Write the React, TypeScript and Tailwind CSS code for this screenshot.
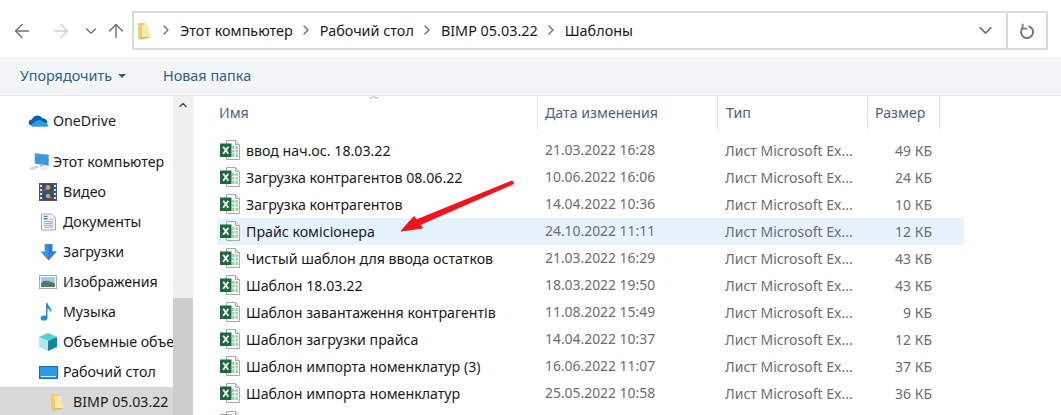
import React from 'react';
import { ArrowLeft, ArrowRight, ArrowUp, ChevronDown, ChevronRight, ChevronUp } from 'lucide-react';

const FolderIcon = ({ className }: { className?: string }) => (
  <svg viewBox="0 0 12 18" className={className}>
    <path d="M0 1 L7 1 L7 16 L2.5 17.5 L0 17 Z" fill="#f0cd6c" />
    <path d="M4 3 L10 3 L12 15 L4 15 Z" fill="#fbe9a8" />
    <path d="M2 15 L12 15 L12 16 L2 17.5 Z" fill="#e3bd5c" />
  </svg>
);

const RefreshIcon = () => (
  <svg viewBox="0 0 16 16" className="w-[16px] h-[16px] mt-[1px]">
    <path d="M9.5 3.2 A6 6 0 1 1 3.6 5" fill="none" stroke="#7a7a7a" strokeWidth="2" />
    <path d="M3.6 .8 V5.6 H8.2" fill="none" stroke="#7a7a7a" strokeWidth="1.8" />
  </svg>
);

const ExcelIcon = () => (
  <svg viewBox="0 0 20 20" className="w-[20px] h-[20px] shrink-0">
    <path d="M6.5 .5 H15.5 L19.5 4.5 V19.5 H6.5 Z" fill="#fff" stroke="#a8a8a8" />
    <path d="M15.5 .5 V4.5 H19.5" fill="#e4e4e4" stroke="#a8a8a8" />
    <rect x="12" y="6" width="6" height="11" fill="#9fd0ae" />
    <path d="M12 9.5 H18 M12 13 H18 M15 6 V17" stroke="#fff" strokeWidth="0.9" />
    <rect x="0" y="3.5" width="11.5" height="13.5" fill="#1b6b3e" />
    <path d="M3.2 6.8 L8.4 13.8 M8.4 6.8 L3.2 13.8" stroke="#fff" strokeWidth="1.8" />
  </svg>
);

const OneDriveIcon = () => (
  <svg viewBox="0 0 22 14" className="w-[21px] h-[14px]">
    <path d="M5 12 C0 12 -1 6 4 5.5 C6 0 13 0 15 4 C19 4 21 7 20 9 Z" fill="#0a5fb4" />
    <path d="M6 13 C3 13 3 9 6.5 8.8 C9 5 14 5 16 8 C20 7.5 23 13 19 13 Z" fill="#2a9fe8" />
  </svg>
);

const PcIcon = () => (
  <svg viewBox="0 0 21 18" className="w-[21px] h-[18px] shrink-0">
    <path d="M7 .5 L20.5 2 V12.5 L7 10.5 Z" fill="#3a9be0" stroke="#5aa6d8" strokeWidth="0.6" />
    <path d="M12 11.5 L15 12 V14 L12 13.5 Z" fill="#b7c0c7" />
    <path d="M0 15 L8 12.5 L12 14 L4 17.5 Z" fill="#d5dade" />
    <path d="M12 15.5 L19 14 L20.5 15.5 L14 17 Z" fill="#e4e8eb" />
  </svg>
);

const VideoIcon = () => (
  <svg viewBox="0 0 18 18" className="w-[18px] h-[18px]">
    <rect width="18" height="18" fill="#4b5560" />
    <path d="M1 2h2v2H1z M1 6h2v2H1z M1 10h2v2H1z M1 14h2v2H1z M15 2h2v2h-2z M15 6h2v2h-2z M15 10h2v2h-2z M15 14h2v2h-2z" fill="#dfe3e6" />
    <rect x="4" y="1" width="10" height="7.5" fill="#1c4f9a" />
    <rect x="4" y="9.5" width="10" height="7.5" fill="#1c4f9a" />
    <circle cx="9" cy="4.5" r="2.4" fill="#e0a526" />
    <rect x="5" y="5.5" width="2.5" height="2" fill="#d8405a" />
    <circle cx="9" cy="13" r="2.2" fill="#e0a526" />
    <rect x="10.5" y="14" width="2.6" height="2" fill="#d8405a" />
  </svg>
);

const DocsIcon = () => (
  <svg viewBox="0 0 16 18" className="w-[15px] h-[18px] ml-[2px]">
    <path d="M.5 .5 H11 L15.5 5 V17.5 H.5 Z" fill="#f5f7f9" stroke="#9aa3ab" />
    <path d="M3 3 H7 M3 5.5 H7" stroke="#2e79c9" strokeWidth="1.4" />
    <path d="M9 6 H13 M3 8.5 H13 M3 10.5 H13 M3 12.5 H13 M3 14.5 H13" stroke="#8fa9c2" strokeWidth="1" />
  </svg>
);

const DownloadIcon = () => (
  <svg viewBox="0 0 18 18" className="w-[17px] h-[17px] ml-[1px]">
    <path d="M5 0 H13 V8 H17.5 L9 17.5 L.5 8 H5 Z" fill="#3e8fe0" />
    <path d="M9 0 H13 V8 H17.5 L9 17.5 Z" fill="#2f7dd0" />
  </svg>
);

const PicturesIcon = () => (
  <svg viewBox="0 0 18 14" className="w-[18px] h-[14px]">
    <rect x=".5" y=".5" width="17" height="13" fill="#fff" stroke="#a3aab0" />
    <rect x="2" y="2" width="14" height="5" fill="#a5c9e8" />
    <path d="M2 8 C6 4 10 6 16 8 V12 H2 Z" fill="#4d7d6f" />
  </svg>
);

const MusicIcon = () => (
  <svg viewBox="0 0 14 18" className="w-[14px] h-[18px] ml-[1px]">
    <ellipse cx="4" cy="15" rx="3.4" ry="2.6" fill="#1a8fe3" />
    <path d="M6 15 V0 H7.5 C8 4 13 5 11 10 C10.5 7 9 6 7.5 5.5 V15 Z" fill="#1a8fe3" />
  </svg>
);

const ObjectsIcon = () => (
  <svg viewBox="0 0 18 18" className="w-[18px] h-[18px]">
    <path d="M9 0 L18 4 L9 8 L0 4 Z" fill="#4ed0d8" />
    <path d="M0 4 L9 8 V18 L0 14 Z" fill="#a8ecef" />
    <path d="M18 4 L9 8 V18 L18 14 Z" fill="#0f8a9c" />
  </svg>
);

const DesktopIcon = () => (
  <svg viewBox="0 0 19 13" className="w-[19px] h-[13px]">
    <rect x=".5" y=".5" width="18" height="12" fill="#2a9cf0" stroke="#0f6cb8" />
    <path d="M2 10.5 H17" stroke="#d6ecfb" strokeWidth="1" />
  </svg>
);

const navItems = [
  { label: 'Видео', icon: <VideoIcon /> },
  { label: 'Документы', icon: <DocsIcon /> },
  { label: 'Загрузки', icon: <DownloadIcon /> },
  { label: 'Изображения', icon: <PicturesIcon /> },
  { label: 'Музыка', icon: <MusicIcon /> },
  { label: 'Объемные объекты', icon: <ObjectsIcon /> },
  { label: 'Рабочий стол', icon: <DesktopIcon /> },
];

const files = [
  { name: 'ввод нач.ос. 18.03.22', date: '21.03.2022 16:28', size: '49 КБ' },
  { name: 'Загрузка контрагентов 08.06.22', date: '10.06.2022 16:06', size: '24 КБ' },
  { name: 'Загрузка контрагентов', date: '14.04.2022 10:36', size: '10 КБ' },
  { name: 'Прайс комісіонера', date: '24.10.2022 11:11', size: '12 КБ', hover: true },
  { name: 'Чистый шаблон для ввода остатков', date: '21.03.2022 16:29', size: '43 КБ' },
  { name: 'Шаблон 18.03.22', date: '18.03.2022 19:50', size: '43 КБ' },
  { name: 'Шаблон завантаження контрагентів', date: '11.08.2022 15:49', size: '9 КБ' },
  { name: 'Шаблон загрузки прайса', date: '14.04.2022 10:37', size: '12 КБ' },
  { name: 'Шаблон импорта номенклатур (3)', date: '16.06.2022 11:07', size: '37 КБ' },
  { name: 'Шаблон импорта номенклатур', date: '25.05.2022 10:58', size: '36 КБ' },
];

const crumbs = ['Этот компьютер', 'Рабочий стол', 'BIMP 05.03.22', 'Шаблоны'];

const App = () => {
  return (
    <div className="relative w-[1061px] h-[415px] overflow-hidden bg-white text-[14.2px] text-[#1a1a1a] font-['Noto_Sans',sans-serif]">
      {/* Address row */}
      <div className="h-[57px] flex items-center pt-[4px] pl-[11px] pr-[13px]">
        <ArrowLeft className="w-[22px] h-[22px] text-[#6e6e6e]" strokeWidth={1.5} />
        <ArrowRight className="w-[22px] h-[22px] ml-[17px] text-[#cfcfcf]" strokeWidth={1.5} />
        <ChevronDown className="w-[18px] h-[18px] ml-[10px] text-[#7a7a7a]" strokeWidth={2} />
        <ArrowUp className="w-[22px] h-[22px] ml-[5px] text-[#6e6e6e]" strokeWidth={1.5} />
        <div className="ml-[5px] h-[39px] w-[874px] border-2 border-r-0 border-[#dadada] flex items-center pl-[4px] text-[14.4px]">
          <FolderIcon className="w-[12px] h-[18px] mr-[3px]" />
          {crumbs.map(c => (
            <div key={c} className="flex items-center">
              <ChevronRight className="w-[16px] h-[16px] ml-[5px] mr-[6px] text-[#6e6e6e]" strokeWidth={2} />
              <span>{c}</span>
            </div>
          ))}
          <ChevronDown className="w-[21px] h-[21px] ml-auto mr-[10px] text-[#7a7a7a]" strokeWidth={2.2} />
        </div>
        <div className="h-[39px] w-[42px] border-2 border-[#dadada] flex items-center justify-center">
          <RefreshIcon />
        </div>
      </div>

      {/* Command bar */}
      <div className="h-[39px] bg-[#f4f5f7] border-b border-[#e6e7e9] flex items-center pl-[20px] text-[14.4px] text-[#2f5f8a]">
        <span>Упорядочить</span>
        <span className="ml-[6px] w-0 h-0 border-x-[4px] border-x-transparent border-t-[4px] border-t-[#2f5f8a]" />
        <span className="ml-[37px]">Новая папка</span>
      </div>

      <div className="flex h-[319px]">
        {/* Navigation pane */}
        <div className="w-[173px] shrink-0 pt-[10px] overflow-hidden">
          <div className="h-[30px] flex items-center pl-[28px] gap-[4px]">
            <OneDriveIcon />
            <span>OneDrive</span>
          </div>
          <div className="h-[30px] mt-[11px] flex items-center pl-[28px] gap-[4px]">
            <PcIcon />
            <span>Этот компьютер</span>
          </div>
          {navItems.map(item => (
            <div key={item.label} className="h-[30px] flex items-center pl-[39px] whitespace-nowrap">
              <div className="w-[24px] shrink-0 flex justify-start">{item.icon}</div>
              <span>{item.label}</span>
            </div>
          ))}
          <div className="h-[30px] bg-[#d9d9d9] flex items-center pl-[51px]">
            <FolderIcon className="w-[12px] h-[18px]" />
            <span className="ml-[10px]">BIMP 05.03.22</span>
          </div>
        </div>

        {/* Scrollbar */}
        <div className="w-[20px] shrink-0 bg-[#f0f0f0] flex flex-col">
          <div className="h-[202px] pt-[3px] flex justify-center">
            <ChevronUp className="w-[12px] h-[12px] text-[#505050]" strokeWidth={3} />
          </div>
          <div className="flex-1 bg-[#cdcdcd]" />
        </div>

        {/* File list */}
        <div className="flex-1 pl-[24px] min-w-0">
          <div className="relative h-[34px] flex items-center text-[#4d6082]">
            <div className="w-[321px] pl-[2px] h-full flex items-center border-r border-[#e5e5e5]">Имя</div>
            <div className="w-[180px] pl-[7px] h-full flex items-center border-r border-[#e5e5e5]">Дата изменения</div>
            <div className="w-[150px] pl-[8px] h-full flex items-center border-r border-[#e5e5e5]">Тип</div>
            <div className="w-[72px] pl-[7px] h-full flex items-center border-r border-[#e5e5e5]">Размер</div>
            <ChevronUp className="absolute left-[149px] top-[-2px] w-[16px] h-[7px] text-[#8a8a8a]" strokeWidth={2} preserveAspectRatio="none" />
          </div>
          <div className="pt-[7px]">
            {[...files, { name: '', date: '', size: '' }].map((f, i) => (
              <div
                key={i}
                className={`h-[27px] w-[747px] flex items-center whitespace-nowrap ${f.hover ? 'bg-[#e5f3ff]' : ''}`}
              >
                <div className="w-[322px] pl-[3px] flex items-center gap-[6px]">
                  <ExcelIcon />
                  <span>{f.name}</span>
                </div>
                <div className="w-[180px] pl-[6px] text-[13.9px] text-[#6d6d6d]">{f.date}</div>
                <div className="w-[148px] pl-[6px] text-[14px] text-[#6d6d6d]">{f.name && 'Лист Microsoft Ex...'}</div>
                <div className="w-[65px] text-right text-[14px] text-[#6d6d6d]">{f.size}</div>
              </div>
            ))}
          </div>
        </div>
      </div>

      {/* Red annotation arrow */}
      <svg className="absolute left-0 top-0 pointer-events-none" width="1061" height="415">
        <path d="M512 180.5 Q515 182 513 184.5 L418 226 L415 220 Z" fill="#f5121a" />
        <path d="M401 231 L414 216.5 L422.5 228 Z" fill="#f5121a" stroke="#f5121a" strokeWidth="1" strokeLinejoin="round" />
      </svg>
    </div>
  );
};

export default App;
